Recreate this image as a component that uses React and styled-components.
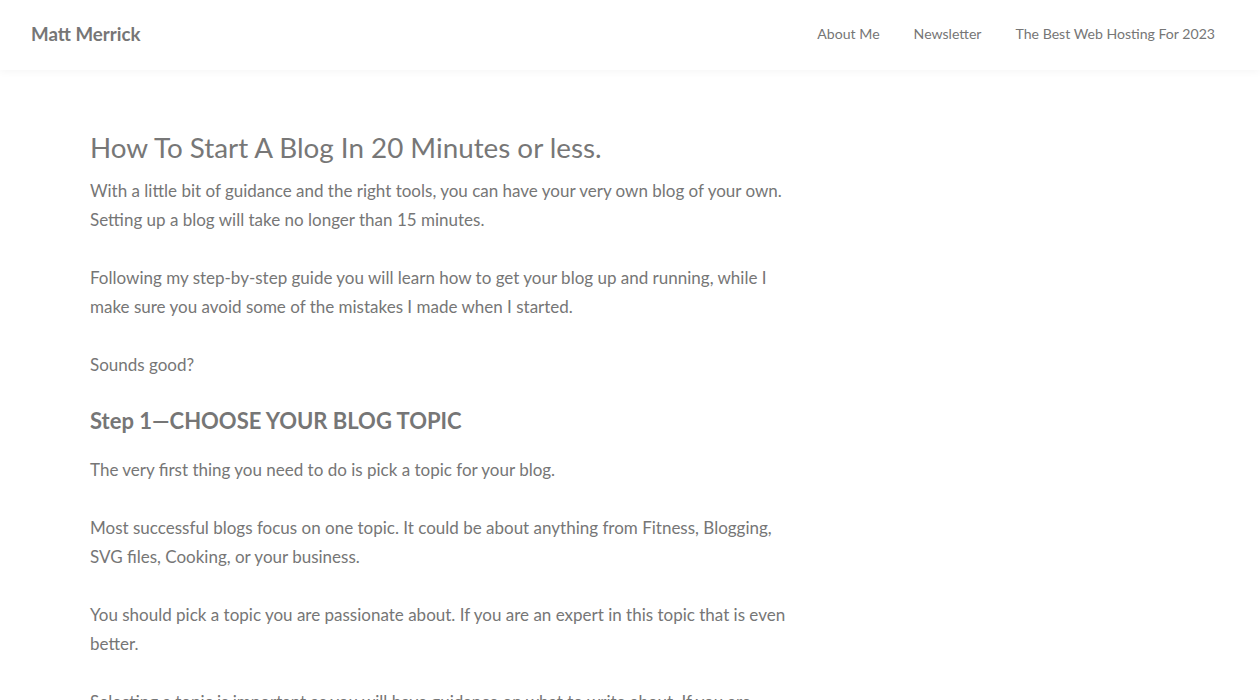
import styled, { createGlobalStyle } from "styled-components";

const Global = createGlobalStyle`
  body {
    margin: 0;
    background: #fff;
    font-family: Lato, "Open Sans", sans-serif;
    color: #767676;
  }
`;

const Header = styled.header`
  height: 70px;
  box-sizing: border-box;
  display: flex;
  align-items: center;
  justify-content: space-between;
  padding: 0 45px 3px 31px;
  background: #fff;
  box-shadow: 0 2px 8px rgba(0, 0, 0, 0.04);
`;

const Logo = styled.a`
  font-size: 18.7px;
  font-weight: 700;
  color: #767676;
  text-decoration: none;
`;

const Nav = styled.nav`
  display: flex;
  gap: 34px;
`;

const NavLink = styled.a`
  font-size: 14.1px;
  color: #767676;
  text-decoration: none;
`;

const Page = styled.div`
  display: grid;
  grid-template-columns: 708px 1fr;
  gap: 40px;
  padding: 60px 0 0 90px;
`;

const Article = styled.article``;

const Sidebar = styled.aside``;

const Title = styled.h1`
  margin: 0 0 10px;
  font-size: 27.8px;
  font-weight: 400;
  line-height: 36px;
  color: #777;
`;

const Heading = styled.h2`
  margin: 0 0 21px;
  font-size: 22px;
  font-weight: 700;
  line-height: 26px;
  color: #767676;
`;

const Para = styled.p`
  margin: 0 0 29px;
  font-size: 17px;
  line-height: 29px;
`;

export default function App() {
  return (
    <>
      <Global />
      <Header>
        <Logo href="#">Matt Merrick</Logo>
        <Nav>
          <NavLink href="#">About Me</NavLink>
          <NavLink href="#">Newsletter</NavLink>
          <NavLink href="#">The Best Web Hosting For 2023</NavLink>
        </Nav>
      </Header>
      <Page>
        <Article>
          <Title>How To Start A Blog In 20 Minutes or less.</Title>
          <Para>
            With a little bit of guidance and the right tools, you can have your very own blog of your own.
            Setting up a blog will take no longer than 15 minutes.
          </Para>
          <Para>
            Following my step-by-step guide you will learn how to get your blog up and running, while I make
            sure you avoid some of the mistakes I made when I started.
          </Para>
          <Para>Sounds good?</Para>
          <Heading>Step 1—CHOOSE YOUR BLOG TOPIC</Heading>
          <Para>The very first thing you need to do is pick a topic for your blog.</Para>
          <Para>
            Most successful blogs focus on one topic. It could be about anything from Fitness, Blogging, SVG
            files, Cooking, or your business.
          </Para>
          <Para>
            You should pick a topic you are passionate about. If you are an expert in this topic that is even
            better.
          </Para>
          <Para>
            Selecting a topic is important as you will have guidance on what to write about. If you are
            knowledgeable in your topic, writing your posts will come naturally.
          </Para>
        </Article>
        <Sidebar />
      </Page>
    </>
  );
}
